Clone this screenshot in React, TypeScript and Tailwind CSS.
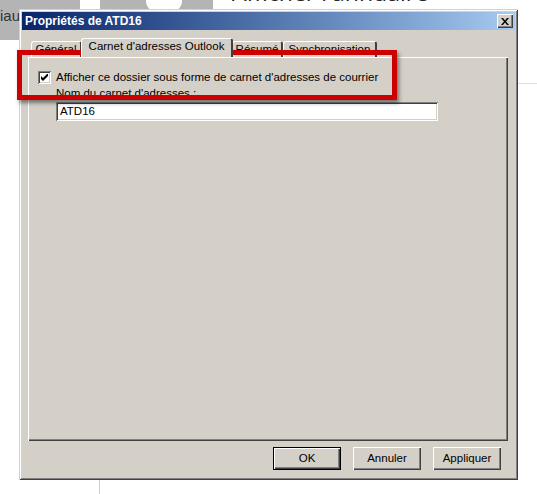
import React from 'react';

const raised =
  'shadow-[inset_1px_1px_#ffffff,inset_-1px_-1px_#404040,inset_-2px_-2px_#808080]';
const sunken =
  'shadow-[inset_1px_1px_#808080,inset_-1px_-1px_#ffffff,inset_2px_2px_#404040,inset_-2px_-2px_#d4d0c8]';

function Tab({ label, active, w }: { label: string; active?: boolean; w: string }) {
  return (
    <div
      className={`${w} ${
        active ? 'h-[19px] -mr-[1px] -ml-[1px] z-10 bg-[#d4d0c8]' : 'h-[16px]'
      } relative flex items-start justify-center rounded-t-[3px] border-l border-t border-white border-r-2 border-r-[#404040] pt-[1px] text-[11.5px] leading-[13px] text-black`}
    >
      {label}
    </div>
  );
}

function Btn({ label, primary }: { label: string; primary?: boolean }) {
  return (
    <button
      className={`w-[68px] h-[23px] bg-[#d4d0c8] text-[11.5px] text-black ${
        primary ? 'border border-black' : ''
      } ${raised}`}
    >
      {label}
    </button>
  );
}

export default function App() {
  return (
    <div className="relative w-[537px] h-[494px] overflow-hidden bg-white font-['Liberation_Sans',Arial,sans-serif]">
      {/* desktop behind the dialog */}
      <div className="absolute left-0 top-0 w-[80px] h-[12px] bg-[#b4b4b4]" />
      <div className="absolute left-0 top-0 w-[19px] h-[40px] bg-[#b4b4b4]" />
      <div className="absolute left-0 top-[8px] text-[15px] leading-[16px] text-[#333]">iau</div>
      <div className="absolute left-[100px] top-0 w-[113px] h-[12px] bg-[#b4b4b4]" />
      <div className="absolute left-[146px] -top-[10px] w-[36px] h-[22px] rounded-full bg-white" />
      <div className="absolute left-[232px] top-[-21px] text-[23px] leading-[26px] text-[#222] font-['Open_Sans',sans-serif]">
        Afficher l'annuaire
      </div>
      <div className="absolute left-[518px] top-[83px] w-[19px] h-px bg-[#dddddd]" />
      <div className="absolute left-[99px] top-[480px] w-px h-[14px] bg-[#cccccc]" />

      {/* dialog window */}
      <div className="absolute left-[19px] top-[9px] w-[499px] h-[471px] bg-[#d4d0c8] p-[3px] shadow-[inset_1px_1px_#d4d0c8,inset_-1px_-1px_#404040,inset_2px_2px_#ffffff,inset_-2px_-2px_#808080] flex flex-col">
        <div className="h-[18px] flex items-center justify-between pl-[3px] pr-[2px] bg-gradient-to-r from-[#0a246a] to-[#a6caf0]">
          <span className="text-white font-bold text-[12px] leading-[14px]">Propriétés de ATD16</span>
          <div className={`w-[16px] h-[14px] bg-[#d4d0c8] flex items-center justify-center ${raised}`}>
            <svg width="8" height="7" viewBox="0 0 8 7">
              <path d="M0 0h2l2 2.5L6 0h2L5 3.5 8 7H6L4 4.5 2 7H0l3-3.5z" fill="#000" />
            </svg>
          </div>
        </div>

        <div className="flex-1 flex flex-col pl-[6px] pt-[8px]">
          <div className="flex items-end h-[19px] pl-[3px]">
            <Tab label="Général" w="w-[51px]" />
            <Tab label="Carnet d'adresses Outlook" w="w-[152px]" active />
            <Tab label="Résumé" w="w-[51px]" />
            <Tab label="Synchronisation" w="w-[94px]" />
          </div>
          <div className="w-[480px] h-[384px] border-l border-t border-white shadow-[inset_-1px_-1px_#404040,inset_-2px_-2px_#808080] pl-[9px] pt-[13px]">
            <div className="flex items-center h-[13px] gap-[5px]">
              <div className={`w-[13px] h-[13px] bg-white flex items-center justify-center ${sunken}`}>
                <svg width="7" height="7" viewBox="0 0 7 7">
                  <path d="M0 2v3l2 2 5-5V-1L2 4z" fill="#000" />
                </svg>
              </div>
              <span className="text-[11.5px] leading-[13px] text-black">
                Afficher ce dossier sous forme de carnet d'adresses de courrier
              </span>
            </div>
            <div className="ml-[18px] mt-[3px] text-[11.5px] leading-[13px] text-black">
              Nom du carnet d'adresses :
            </div>
            <div className={`ml-[18px] mt-[2px] w-[382px] h-[19px] bg-white flex items-center pl-[4px] text-[11.5px] text-black ${sunken}`}>
              ATD16
            </div>
          </div>
          <div className="flex justify-end gap-[12px] pr-[14px] mt-[6px]">
            <Btn label="OK" primary />
            <Btn label="Annuler" />
            <Btn label="Appliquer" />
          </div>
        </div>
      </div>

      {/* red highlight */}
      <div className="absolute left-[17px] top-[50px] w-[380px] h-[50px] border-[5px] border-[#cc0000] shadow-[2px_3px_4px_rgba(0,0,0,0.45)]" />
    </div>
  );
}
